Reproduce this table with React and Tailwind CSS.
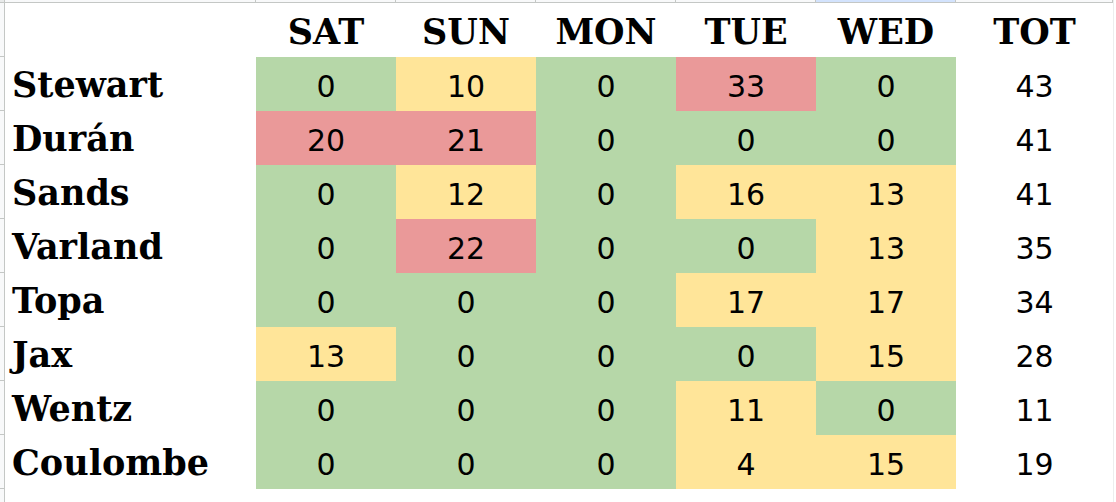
import React from 'react';

const DAYS = ['SAT', 'SUN', 'MON', 'TUE', 'WED'];

// g = green, y = yellow, r = red
const ROWS = [
  { name: 'Stewart', vals: [0, 10, 0, 33, 0], tones: 'gygrg', tot: 43 },
  { name: 'Durán', vals: [20, 21, 0, 0, 0], tones: 'rrggg', tot: 41 },
  { name: 'Sands', vals: [0, 12, 0, 16, 13], tones: 'gygyy', tot: 41 },
  { name: 'Varland', vals: [0, 22, 0, 0, 13], tones: 'grggy', tot: 35 },
  { name: 'Topa', vals: [0, 0, 0, 17, 17], tones: 'gggyy', tot: 34 },
  { name: 'Jax', vals: [13, 0, 0, 0, 15], tones: 'ygggy', tot: 28 },
  { name: 'Wentz', vals: [0, 0, 0, 11, 0], tones: 'gggyg', tot: 11 },
  { name: 'Coulombe', vals: [0, 0, 0, 4, 15], tones: 'gggyy', tot: 19 },
];

const TONE = {
  g: 'bg-[#b6d7a8]',
  y: 'bg-[#ffe599]',
  r: 'bg-[#ea9999]',
};

const slab = "font-['DejaVu_Serif',serif] font-bold text-black text-[35px] leading-none";
const num = "font-['DejaVu_Sans',sans-serif] text-[30px] text-black";

export default function App() {
  return (
    <div className="w-[1116px] h-[502px] bg-white overflow-hidden grid grid-cols-[5px_251px_140px_140px_140px_140px_140px_157px_1fr] grid-rows-[3px_54px_repeat(8,54px)_1fr]">
      {/* top column-letter strip */}
      <div className="bg-[#e8eaea] border-r border-b border-[#c4c7c5]" />
      <div className="bg-[#f8f9fa] border-r border-b border-[#c4c7c5]" />
      {DAYS.map((d) => (
        <div
          key={d}
          className={`border-r border-b border-[#c4c7c5] ${d === 'WED' ? 'bg-[#d3e3fd]' : 'bg-[#f8f9fa]'}`}
        />
      ))}
      <div className="bg-[#f8f9fa] border-r border-b border-[#c4c7c5]" />
      <div className="bg-white border-l border-[#eceeee]" />

      {/* header row */}
      <div className="bg-[#f8f9fa] border-r border-b border-[#c4c7c5]" />
      <div />
      {DAYS.map((d) => (
        <div key={d} className={`flex items-center justify-center pt-[2px] ${slab}`}>
          {d}
        </div>
      ))}
      <div className={`flex items-center justify-center pt-[2px] ${slab}`}>TOT</div>
      <div className="border-l border-[#eceeee]" />

      {ROWS.map((row) => (
        <React.Fragment key={row.name}>
          <div className="bg-[#f8f9fa] border-r border-b border-[#c4c7c5]" />
          <div className={`flex items-center pl-[7px] pt-[1px] ${slab}`}>{row.name}</div>
          {row.vals.map((v, i) => (
            <div
              key={i}
              className={`flex items-center justify-center pt-[5px] ${num} ${TONE[row.tones[i]]}`}
            >
              {v}
            </div>
          ))}
          <div className={`flex items-center justify-center pt-[5px] ${num}`}>{row.tot}</div>
          <div className="border-l border-[#eceeee]" />
        </React.Fragment>
      ))}

      <div className="bg-[#f8f9fa] border-r border-[#c4c7c5]" />
      <div className="col-span-7" />
      <div className="border-l border-[#eceeee]" />
    </div>
  );
}
